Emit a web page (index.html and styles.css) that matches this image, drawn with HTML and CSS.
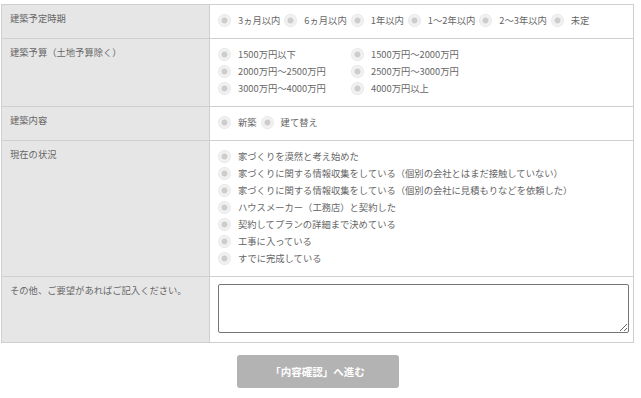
FILE: index.html
```html
<!DOCTYPE html>
<html lang="ja">
<head>
<meta charset="UTF-8" />
<title>お問い合わせフォーム</title>
<link rel="stylesheet" href="styles.css">
</head>
<body>
  <form class="entry-form">
    <table class="form-table">
      <tr>
        <th>建築予定時期</th>
        <td>
          <div class="inline-options">
            <label class="opt"><span class="radio"></span>3ヵ月以内</label>
            <label class="opt"><span class="radio"></span>6ヵ月以内</label>
            <label class="opt"><span class="radio"></span>1年以内</label>
            <label class="opt"><span class="radio"></span>1〜2年以内</label>
            <label class="opt"><span class="radio"></span>2〜3年以内</label>
            <label class="opt"><span class="radio"></span>未定</label>
          </div>
        </td>
      </tr>
      <tr>
        <th>建築予算（土地予算除く）</th>
        <td>
          <div class="grid-options">
            <label class="opt"><span class="radio"></span>1500万円以下</label>
            <label class="opt"><span class="radio"></span>1500万円〜2000万円</label>
            <label class="opt"><span class="radio"></span>2000万円〜2500万円</label>
            <label class="opt"><span class="radio"></span>2500万円〜3000万円</label>
            <label class="opt"><span class="radio"></span>3000万円〜4000万円</label>
            <label class="opt"><span class="radio"></span>4000万円以上</label>
          </div>
        </td>
      </tr>
      <tr>
        <th>建築内容</th>
        <td>
          <div class="inline-options">
            <label class="opt"><span class="radio"></span>新築</label>
            <label class="opt"><span class="radio"></span>建て替え</label>
          </div>
        </td>
      </tr>
      <tr>
        <th>現在の状況</th>
        <td>
          <div class="list-options">
            <label class="opt"><span class="radio"></span>家づくりを漠然と考え始めた</label>
            <label class="opt"><span class="radio"></span>家づくりに関する情報収集をしている（個別の会社とはまだ接触していない）</label>
            <label class="opt"><span class="radio"></span>家づくりに関する情報収集をしている（個別の会社に見積もりなどを依頼した）</label>
            <label class="opt"><span class="radio"></span>ハウスメーカー（工務店）と契約した</label>
            <label class="opt"><span class="radio"></span>契約してプランの詳細まで決めている</label>
            <label class="opt"><span class="radio"></span>工事に入っている</label>
            <label class="opt"><span class="radio"></span>すでに完成している</label>
          </div>
        </td>
      </tr>
      <tr>
        <th>その他、ご要望があればご記入ください。</th>
        <td class="memo-cell"><textarea class="memo"></textarea></td>
      </tr>
    </table>

    <div class="submit-area">
      <button type="button" class="submit-btn">「内容確認」へ進む</button>
    </div>
  </form>
</body>
</html>
```

FILE: styles.css
```css
* {
  box-sizing: border-box;
}

body {
  margin: 0;
  padding: 4px 0 0 1px;
  background: #fff;
  color: #666;
  font-family: "Noto Sans CJK JP", "Noto Sans", sans-serif;
  font-size: 9.3px;
}

.entry-form {
  width: 633px;
}

.form-table {
  width: 633px;
  border-collapse: collapse;
  table-layout: fixed;
}

.form-table th,
.form-table td {
  border: 1px solid #cfcfcf;
  vertical-align: top;
  text-align: left;
}

.form-table th {
  width: 208px;
  background: #e6e6e6;
  font-weight: normal;
  padding: 5px 8px 9px;
  line-height: 17px;
}

.form-table td {
  padding: 7px 8px 9px 8px;
  line-height: 17px;
}

.opt {
  display: flex;
  align-items: center;
  white-space: nowrap;
  height: 17px;
}

.radio {
  width: 13px;
  height: 13px;
  border-radius: 50%;
  margin-right: 7px;
  flex: none;
  background: radial-gradient(circle, #cdcdcd 0, #cdcdcd 2.6px, #f1f1f1 3.4px, #f1f1f1 5.2px, #e2e2e2 6.5px);
}

.inline-options {
  display: flex;
  gap: 4px;
}

.grid-options {
  display: grid;
  grid-template-columns: 133px auto;
}

.list-options {
  display: flex;
  flex-direction: column;
}

.memo-cell {
  padding-top: 8px;
}

.memo {
  display: block;
  width: 411px;
  height: 49px;
  border: 1px solid #767676;
  border-radius: 2px;
  margin: 0;
}

.submit-area {
  display: flex;
  justify-content: center;
  padding-top: 12px;
}

.submit-btn {
  width: 162px;
  height: 33px;
  border: none;
  border-radius: 3px;
  background: #b3b3b3;
  color: #fff;
  font-family: "Noto Sans CJK JP", sans-serif;
  font-size: 10.5px;
  font-weight: bold;
}
```
